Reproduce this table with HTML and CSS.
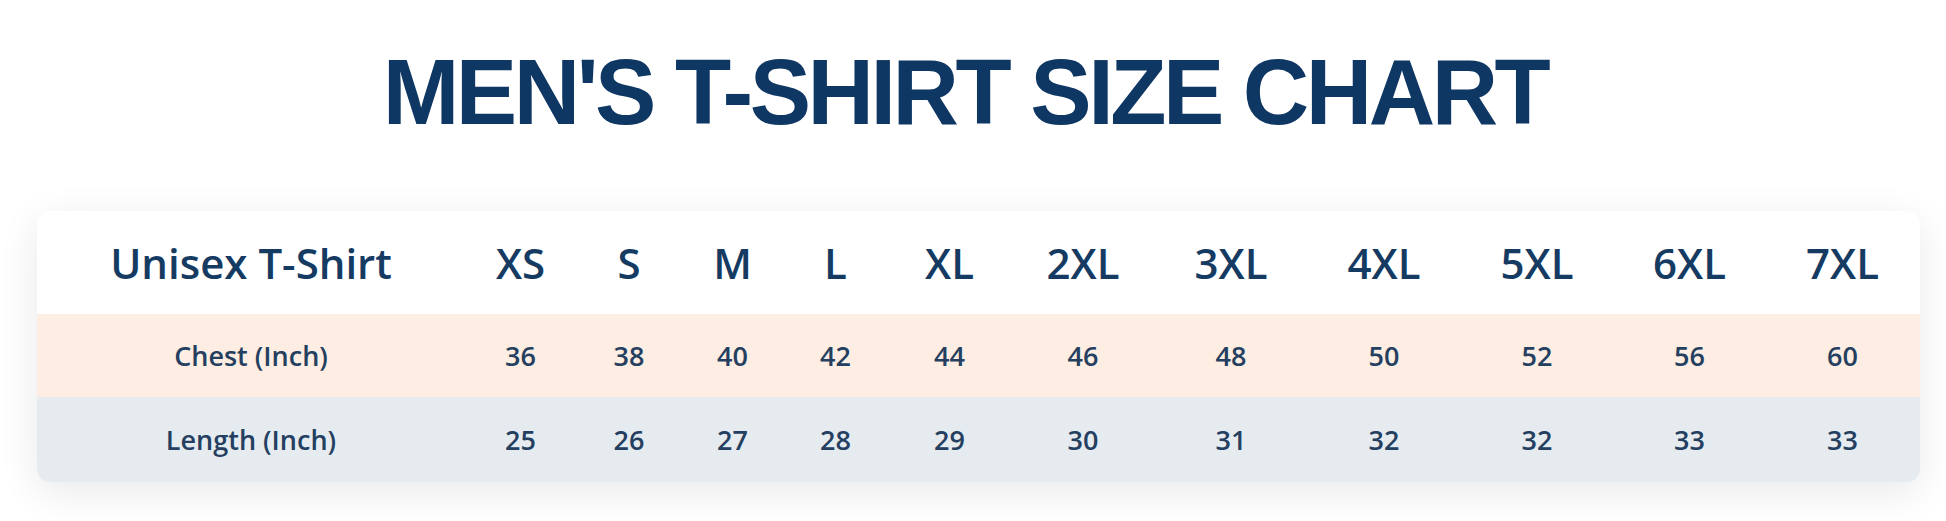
FILE: index.html
```html
<!DOCTYPE html>
<html lang="en">
<head>
<meta charset="utf-8">
<title>Men's T-Shirt Size Chart</title>
<link rel="stylesheet" href="styles.css">
</head>
<body>
<main class="page">
  <h1 class="title">MEN'S T-SHIRT SIZE CHART</h1>
  <section class="card">
    <div class="row row-head">
      <div class="cell label">Unisex T-Shirt</div>
      <div class="cell">XS</div>
      <div class="cell">S</div>
      <div class="cell">M</div>
      <div class="cell">L</div>
      <div class="cell">XL</div>
      <div class="cell">2XL</div>
      <div class="cell">3XL</div>
      <div class="cell">4XL</div>
      <div class="cell">5XL</div>
      <div class="cell">6XL</div>
      <div class="cell">7XL</div>
    </div>
    <div class="row row-chest">
      <div class="cell label">Chest (Inch)</div>
      <div class="cell">36</div>
      <div class="cell">38</div>
      <div class="cell">40</div>
      <div class="cell">42</div>
      <div class="cell">44</div>
      <div class="cell">46</div>
      <div class="cell">48</div>
      <div class="cell">50</div>
      <div class="cell">52</div>
      <div class="cell">56</div>
      <div class="cell">60</div>
    </div>
    <div class="row row-length">
      <div class="cell label">Length (Inch)</div>
      <div class="cell">25</div>
      <div class="cell">26</div>
      <div class="cell">27</div>
      <div class="cell">28</div>
      <div class="cell">29</div>
      <div class="cell">30</div>
      <div class="cell">31</div>
      <div class="cell">32</div>
      <div class="cell">32</div>
      <div class="cell">33</div>
      <div class="cell">33</div>
    </div>
  </section>
</main>
</body>
</html>
```
FILE: styles.css
```css
html, body {
  margin: 0;
  padding: 0;
  background: #ffffff;
}

.page {
  width: 1946px;
  height: 521px;
  overflow: hidden;
  padding-top: 46px;
  box-sizing: border-box;
}

.title {
  margin: 0;
  padding-right: 16px;
  font-family: "Liberation Sans", Arial, sans-serif;
  font-weight: 700;
  font-size: 92px;
  line-height: 92px;
  letter-spacing: -3.5px;
  color: #0f3763;
  text-align: center;
}

.card {
  margin: 73px 0 0 37px;
  width: 1883px;
  background: #ffffff;
  border-radius: 13px;
  overflow: hidden;
  box-shadow: 0 10px 40px rgba(0, 0, 0, 0.09);
}

.row {
  display: grid;
  grid-template-columns: 428px 111px 106px 101px 105px 123px 144px 152px 154px 152px 153px 153px;
  align-items: center;
  font-family: "Open Sans", "Noto Sans", sans-serif;
}

.cell {
  text-align: center;
}

.row-head {
  height: 103px;
  font-size: 42px;
  font-weight: 600;
  color: #163b63;
}

.row-chest,
.row-length {
  font-size: 27px;
  font-weight: 600;
  color: #243f60;
}

.row-chest {
  height: 83px;
  background: #fdede2;
}

.row-length {
  height: 85px;
  background: #e6ebf0;
}
```
